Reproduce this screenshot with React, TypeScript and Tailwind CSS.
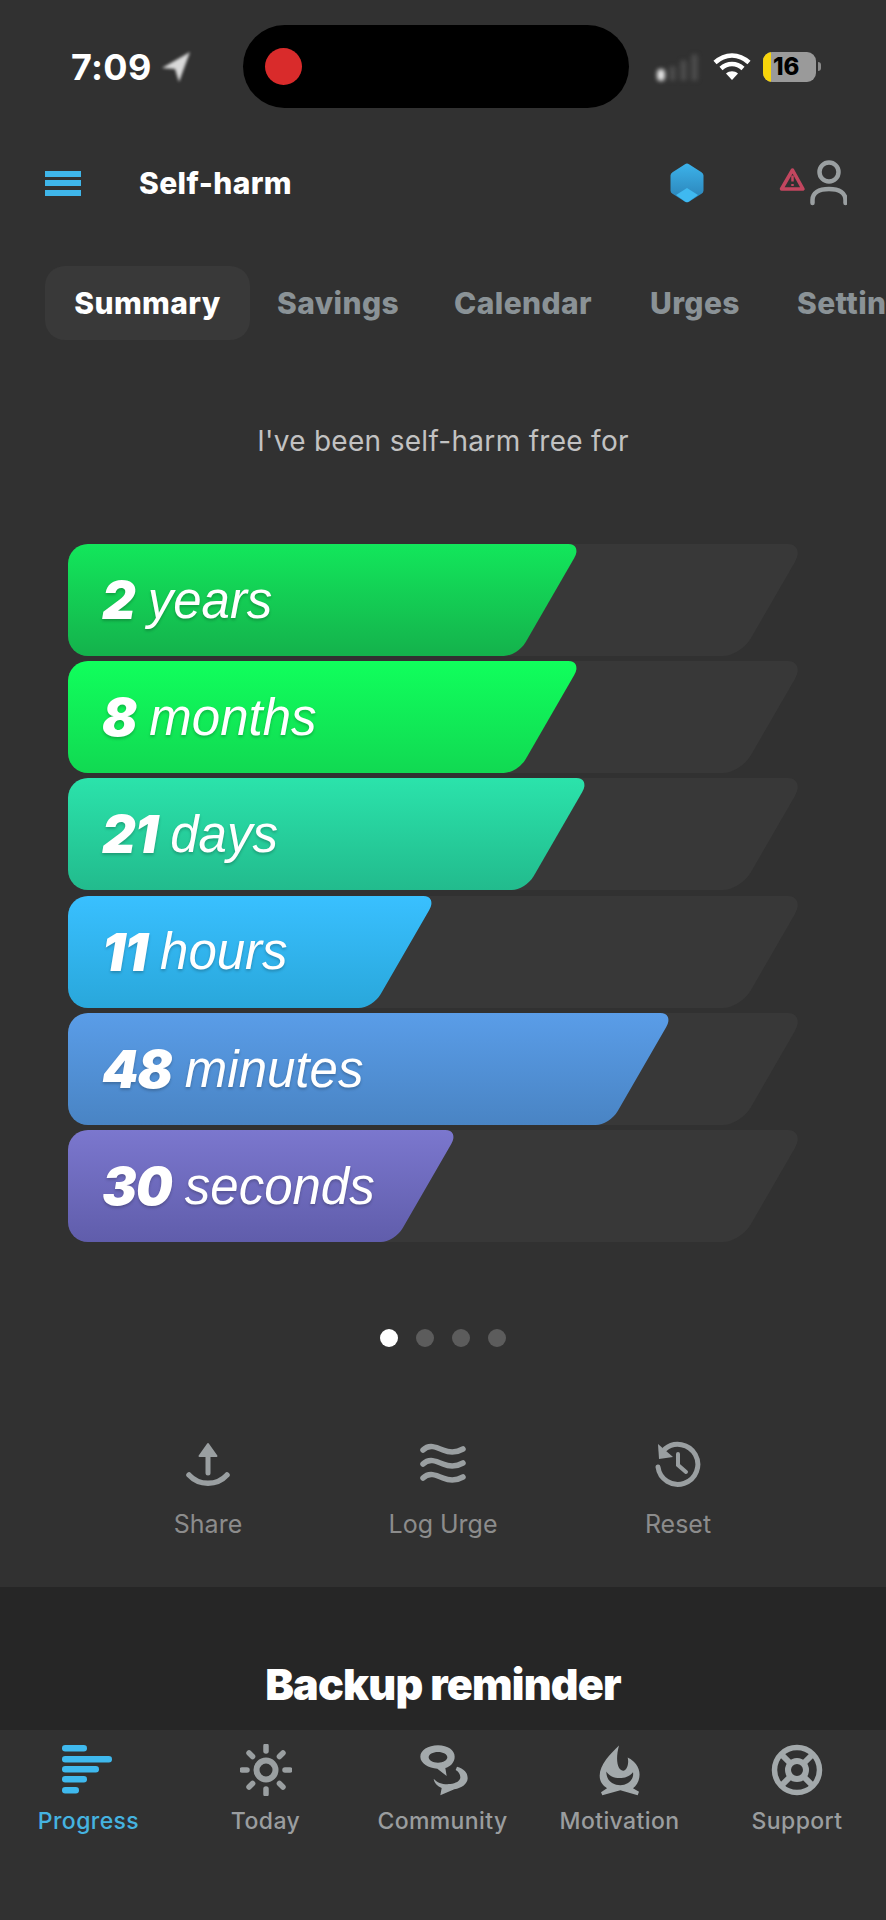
import React from "react";

const GREY = "#9a9fa1";

const bars = [
  { n: "2", u: "years", w: 542, cls: "bg-linear-to-b from-[#12e75b] to-[#14b24c]" },
  { n: "8", u: "months", w: 542, cls: "bg-linear-to-b from-[#10ff5c] to-[#11d952]" },
  { n: "21", u: "days", w: 550, cls: "bg-linear-to-b from-[#2be3ab] to-[#22bb8d]" },
  { n: "11", u: "hours", w: 397, cls: "bg-linear-to-b from-[#39c0ff] to-[#29a7db]" },
  { n: "48", u: "minutes", w: 634, cls: "bg-linear-to-b from-[#5a9de8] to-[#4984c4]" },
  { n: "30", u: "seconds", w: 419, cls: "bg-linear-to-b from-[#7b77ce] to-[#605dab]" },
];

function Bar({ n, u, w, cls }: { n: string; u: string; w: number; cls: string }) {
  return (
    <div className="grid h-[112px] w-[732px] overflow-hidden rounded-l-[20px] [&>*]:col-start-1 [&>*]:row-start-1">
      <div className="ml-[-60px] h-[112px] w-[765px] skew-x-[-30deg] rounded-r-[18px] bg-[#383838]">
        <div className={`h-full rounded-r-[14px] ${cls}`} style={{ width: w }} />
      </div>
      <div className="z-10 flex items-center pt-[2px] pl-[34px] text-white italic [text-shadow:0_2px_3px_rgba(0,0,0,0.22)]">
        <span className="font-['Inter'] text-[52px] font-black tracking-[-1px]">{n}</span>
        <span className="ml-[13px] font-['Liberation_Sans'] text-[51px] font-normal">{u}</span>
      </div>
    </div>
  );
}

function Hamburger() {
  return (
    <div className="flex h-[25px] w-[36px] flex-col justify-between">
      <div className="h-[6px] bg-[#3fb6ea]" />
      <div className="h-[6px] bg-[#3fb6ea]" />
      <div className="h-[6px] bg-[#3fb6ea]" />
    </div>
  );
}

function Hex() {
  return (
    <svg width="36" height="40" viewBox="0 0 36 40">
      <defs>
        <linearGradient id="hx" x1="0" y1="0" x2="0" y2="1">
          <stop offset="0" stopColor="#3cb2ea" />
          <stop offset="1" stopColor="#2a80b4" />
        </linearGradient>
      </defs>
      <path d="M16 1.2a4 4 0 0 1 4 0l12.5 8a4 4 0 0 1 2 3.4v14.8a4 4 0 0 1-2 3.4L20 38.8a4 4 0 0 1-4 0L3.5 30.800a4 4 0 0 1-2-3.400V12.600a4 4 0 0 1 2-3.400z" fill="url(#hx)" />
      <path d="M18 25l11 7-9 6.500a4 4 0 0 1-4 0L7 32z" fill="#3fb9f0" />
    </svg>
  );
}

function AlertUser() {
  return (
    <svg width="68" height="46" viewBox="0 0 68 46" fill="none">
      <path d="M13.500 10L24 29H2.500z" stroke="#c2465f" strokeWidth="3.500" strokeLinejoin="round" />
      <path d="M13.500 15.500v6M13.500 24v2" stroke="#c2465f" strokeWidth="2.500" />
      <circle cx="50" cy="12" r="9.500" stroke={GREY} strokeWidth="4.500" />
      <path d="M33.500 43v-3c0-7 6-11 16.500-11s16.500 4 16.500 11v3" stroke={GREY} strokeWidth="4.500" strokeLinecap="round" />
    </svg>
  );
}

function Wifi() {
  return (
    <svg width="38" height="28" viewBox="0 0 38 28" fill="none" stroke="#fff" strokeWidth="4.500">
      <path d="M2 9.500C12 0 26 0 36 9.500" />
      <path d="M8 15.500c6.500-6 15.500-6 22 0" />
      <path d="M19 27l-6-6.500c3.500-3 8.500-3 12 0z" fill="#fff" stroke="none" />
    </svg>
  );
}

function ShareIcon() {
  return (
    <svg width="44" height="46" viewBox="0 0 44 46" fill="none" stroke={GREY} strokeWidth="5" strokeLinecap="round">
      <path d="M22 10v22" />
      <path d="M13.500 15L22 3l8.500 12z" fill={GREY} stroke="#9a9fa1" strokeWidth="2" strokeLinejoin="round" />
      <path d="M3 34c10 11 28 11 38 0" strokeWidth="5.500" />
    </svg>
  );
}

function WavesIcon() {
  return (
    <svg width="46" height="44" viewBox="0 0 46 44" fill="none" stroke={GREY} strokeWidth="5.500" strokeLinecap="round">
      <path d="M3 8c6-6 13-3 20 0s13 3 20-1" />
      <path d="M3 22c6-6 13-3 20 0s13 3 20-1" />
      <path d="M3 36c6-6 13-3 20 0s13 3 20-1" />
    </svg>
  );
}

function ResetIcon() {
  return (
    <svg width="46" height="46" viewBox="0 0 46 46" fill="none" stroke={GREY} strokeWidth="5" strokeLinecap="round">
      <path d="M3 26A20 20 0 1 0 10 8" />
      <path d="M3 3l1 15 14-2z" fill={GREY} stroke="none" />
      <path d="M23 13v11l8 7" strokeWidth="4" />
    </svg>
  );
}

function ProgressIcon() {
  return (
    <svg className="mr-[3px]" width="50" height="50" viewBox="0 0 50 50" fill="#3fb9ee">
      <rect x="0" y="0" width="25" height="6.500" rx="3.200" />
      <rect x="0" y="11" width="50" height="6.500" rx="3.200" />
      <rect x="0" y="21" width="37" height="6.500" rx="3.200" />
      <rect x="0" y="31" width="25" height="6.500" rx="3.200" />
      <rect x="0" y="42" width="17" height="6.500" rx="3.200" />
    </svg>
  );
}

function TodayIcon() {
  const rays = [0, 45, 90, 135, 180, 225, 270, 315];
  return (
    <svg width="52" height="52" viewBox="-26 -26 52 52" fill="none" stroke={GREY}>
      <circle r="9.500" strokeWidth="6" />
      {rays.map((a) => (
        <path key={a} d="M0 -24V-19" strokeWidth="5.500" strokeLinecap="round" transform={`rotate(${a})`} />
      ))}
    </svg>
  );
}

function CommunityIcon() {
  return (
    <svg width="50" height="52" viewBox="85 38 150 156" fill="none">
      <path d="M145 42c30 0 50 15 50 34 0 18-14 30-28 34l4 24-28-22c-26-2-51-16-51-36 0-19 23-34 53-34zM145 62c-16 0-28 7-28 16s12 16 28 16 28-7 28-16-12-16-28-16z" fill="#a3a9ab" fillRule="evenodd" />
      <path d="M202 106c20 6 32 16 32 34 0 18-18 30-40 34l-42 18 4-22c-12-6-22-14-24-28 12 14 30 18 50 16 18-2 30-10 30-20 0-10-6-18-14-22z" fill="#a3a9ab" />
    </svg>
  );
}

function MotivationIcon() {
  return (
    <svg width="45" height="52" viewBox="620 40 135 155">
      <path
        fillRule="evenodd"
        fill="#a3a9ab"
        d="M686 44C660 70 628 100 628 135C628 155 640 165 650 172L632 184L636 193L690 178L742 193L746 183L728 172C745 160 752 135 745 115C738 95 722 85 712 80C716 95 712 115 700 120C680 118 675 85 686 44ZM648 122C662 146 706 150 728 124C732 146 712 163 690 163C665 163 648 148 648 122Z"
      />
    </svg>
  );
}

function SupportIcon() {
  return (
    <svg width="52" height="52" viewBox="-26 -26 52 52" fill="none" stroke="#a3a9ab">
      <circle r="22.500" strokeWidth="5.500" />
      <circle r="9" strokeWidth="6" />
      <path d="M-16 -16L-6 -6M16 -16L6 -6M-16 16L-6 6M16 16L6 6" strokeWidth="6" />
    </svg>
  );
}

const tabs = [
  { label: "Progress", icon: <ProgressIcon />, cls: "w-[177px] text-[#45b3e0]" },
  { label: "Today", icon: <TodayIcon />, cls: "w-[177px] text-[#9a9d9f]" },
  { label: "Community", icon: <CommunityIcon />, cls: "w-[177px] text-[#9a9d9f]" },
  { label: "Motivation", icon: <MotivationIcon />, cls: "w-[177px] text-[#9a9d9f]" },
  { label: "Support", icon: <SupportIcon />, cls: "w-[178px] text-[#9a9d9f]" },
];

export default function App() {
  return (
    <div className="flex h-[1920px] w-[886px] flex-col overflow-hidden bg-[#313131] font-['Inter','Liberation_Sans',sans-serif]">
      {/* status bar */}
      <div className="flex h-[134px] shrink-0 items-start pt-[25px]">
        <div className="flex h-[83px] w-[243px] items-center pl-[71px]">
          <span className="text-[36px] leading-none font-bold tracking-[0.3px] text-white">7:09</span>
          <svg className="ml-[9px] blur-[1.5px]" width="30" height="32" viewBox="0 0 30 32">
            <path d="M29 1L1 17l13 1 4 13z" fill="#d8d8d8" />
          </svg>
        </div>
        <div className="flex h-[83px] w-[386px] items-center rounded-full bg-black pl-[22px]">
          <div className="h-[37px] w-[37px] rounded-full bg-[#d92b2b]" />
        </div>
        <div className="flex h-[83px] items-center pl-[28px]">
          <div className="flex h-[28px] w-[43px] items-end gap-[4px] blur-[2px]">
            <div className="h-[12px] w-[8px] rounded-full bg-[#e4e4e4]" />
            <div className="h-[15px] w-[7px] rounded-sm bg-[#4a4a4a]" />
            <div className="h-[21px] w-[7px] rounded-sm bg-[#4a4a4a]" />
            <div className="h-[27px] w-[7px] rounded-sm bg-[#4a4a4a]" />
          </div>
          <div className="ml-[13px]">
            <Wifi />
          </div>
          <div className="ml-[12px] flex h-[30px] w-[53px] items-center overflow-hidden rounded-[9px] bg-[#9a9a9a]">
            <div className="h-full w-[8px] bg-[#f7d40a]" />
            <span className="ml-[2px] text-[24px] leading-none font-extrabold text-black">16</span>
          </div>
          <div className="ml-[2px] h-[9px] w-[3px] rounded-r-full bg-[#8a8a8a]" />
        </div>
      </div>

      {/* nav */}
      <div className="flex h-[98px] shrink-0 items-center pl-[45px]">
        <Hamburger />
        <span className="ml-[58px] w-[156px] shrink-0 text-[30px] font-extrabold tracking-[0.4px] whitespace-nowrap text-white">Self-harm</span>
        <div className="ml-[374px]">
          <Hex />
        </div>
        <div className="ml-[74px]">
          <AlertUser />
        </div>
      </div>

      {/* tabs */}
      <div className="mt-[34px] flex h-[74px] shrink-0 items-center overflow-hidden pl-[45px] text-[30px] font-extrabold tracking-[0.4px] whitespace-nowrap text-[#8a9296]">
        <div className="flex h-[74px] w-[205px] shrink-0 items-center justify-center rounded-[20px] bg-[#393939] text-white">Summary</div>
        <span className="ml-[27px] w-[121px] shrink-0">Savings</span>
        <span className="ml-[56px] w-[140px] shrink-0">Calendar</span>
        <span className="ml-[56px] w-[91px] shrink-0">Urges</span>
        <span className="ml-[56px] shrink-0">Settings</span>
      </div>

      {/* heading */}
      <div className="mt-[84px] flex h-[34px] shrink-0 items-center justify-center text-[28px] tracking-[0.3px] text-[#c2c2c2]">
        I&apos;ve been self-harm free for
      </div>

      {/* bars */}
      <div className="mt-[86px] ml-[68px] flex shrink-0 flex-col gap-[5.2px]">
        {bars.map((b) => (
          <Bar key={b.u} {...b} />
        ))}
      </div>

      {/* dots */}
      <div className="mt-[87px] flex shrink-0 justify-center gap-[18px]">
        <div className="h-[18px] w-[18px] rounded-full bg-white" />
        <div className="h-[18px] w-[18px] rounded-full bg-[#5c5c5c]" />
        <div className="h-[18px] w-[18px] rounded-full bg-[#5c5c5c]" />
        <div className="h-[18px] w-[18px] rounded-full bg-[#5c5c5c]" />
      </div>

      {/* actions */}
      <div className="mt-[94px] grid shrink-0 grid-cols-[235px_235px_235px] justify-center text-[25px] text-[#8c8c8c]">
        <div className="flex flex-col items-center">
          <div className="flex h-[46px] items-center"><ShareIcon /></div>
          <span className="mt-[22px] leading-[30px]">Share</span>
        </div>
        <div className="flex flex-col items-center">
          <div className="flex h-[46px] items-center"><WavesIcon /></div>
          <span className="mt-[22px] leading-[30px]">Log Urge</span>
        </div>
        <div className="flex flex-col items-center">
          <div className="flex h-[46px] items-center"><ResetIcon /></div>
          <span className="mt-[22px] leading-[30px]">Reset</span>
        </div>
      </div>

      {/* dark section */}
      <div className="mt-[48px] flex h-[143px] shrink-0 items-end justify-center bg-[#262626] pb-[21px] text-[43px] leading-[50px] font-black tracking-[-0.8px] text-white">
        Backup reminder
      </div>

      {/* tab bar */}
      <div className="flex flex-1 items-start pt-[14px]">
        {tabs.map((t) => (
          <div key={t.label} className={`flex shrink-0 flex-col items-center ${t.cls}`}>
            <div className="flex h-[52px] items-center">{t.icon}</div>
            <span className="mt-[10px] text-[23px] leading-[30px] font-medium tracking-[0.4px]">{t.label}</span>
          </div>
        ))}
      </div>
    </div>
  );
}
